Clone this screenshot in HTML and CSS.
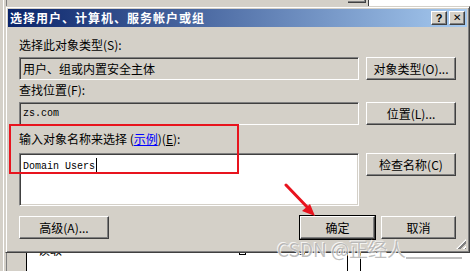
FILE: index.html
```html
<!DOCTYPE html>
<html lang="zh-CN">
  <head>
    <meta charset="utf-8" />
    <title>选择用户、计算机、服务帐户或组</title>
    <link rel="stylesheet" href="styles.css">
  </head>
  <body>
    <div class="desktop">
      <div class="parent">
        <div class="parent-btn"></div>
        <div class="parent-white-top"></div>
        <div class="parent-white-right"></div>
        <div class="parent-list">
          <span class="list-text">读取</span>
          <span class="list-check c1"></span>
          <span class="list-check c2"></span>
          <span class="list-col col1"></span>
          <span class="list-col col2"></span>
        </div>
      </div>

      <div class="dialog">
        <div class="titlebar">
          <span class="title">选择用户、计算机、服务帐户或组</span>
          <span class="title-buttons">
            <span class="tbtn">?</span>
            <span class="tbtn tbtn-x">✕</span>
          </span>
        </div>

        <div class="body">
          <div class="label first">选择此对象类型(S):</div>
          <div class="row">
            <div class="field">用户、组或内置安全主体</div>
            <button class="btn">对象类型(O)...</button>
          </div>

          <div class="label">查找位置(F):</div>
          <div class="row">
            <div class="field mono">zs.com</div>
            <button class="btn">位置(L)...</button>
          </div>

          <div class="label third">输入对象名称来选择 (<a class="link">示例</a>)(<u>E</u>):</div>
          <div class="row">
            <div class="field area mono">Domain Users<span class="caret"></span></div>
            <button class="btn">检查名称(C)</button>
          </div>

          <div class="footer">
            <button class="btn">高级(A)...</button>
            <div class="footer-right">
              <button class="btn btn-small btn-default">确定</button>
              <button class="btn btn-small">取消</button>
            </div>
          </div>
        </div>

        <div class="grip"></div>
        <div class="highlight"></div>
      </div>

      <svg class="arrow" width="40" height="40" viewBox="0 0 40 40">
        <line x1="2" y1="2" x2="26" y2="27" stroke="#e8141e" stroke-width="3" stroke-linecap="round" />
        <polygon points="31,33 18,28 26,21" fill="#e8141e" />
      </svg>

      <div class="watermark">CSDN @正经人<span class="wm-line"></span></div>
    </div>
  </body>
</html>
```

FILE: styles.css
```css
html {
  font-family: "Noto Sans CJK SC", "Liberation Sans", sans-serif;
  font-size: 12px;
  line-height: 14px;
}

body {
  margin: 0;
  background-color: #d4d0c8;
}

.desktop {
  position: relative;
  width: 476px;
  height: 271px;
  overflow: hidden;
  background-color: #d4d0c8;
}

/* window behind the dialog */

.parent {
  position: absolute;
  inset: 0;
  border-left: 3px solid #d4d0c8;
}

.parent::before {
  content: "";
  position: absolute;
  left: 0;
  top: 0;
  bottom: 0;
  width: 1px;
  background: #fff;
}

.parent::after {
  content: "";
  position: absolute;
  left: 3px;
  top: 0;
  bottom: 0;
  width: 1px;
  background: #808080;
}

.parent-btn {
  position: absolute;
  left: 345px;
  top: -12px;
  width: 17px;
  height: 14px;
  border-right: 1px solid #404040;
  border-bottom: 1px solid #404040;
  box-shadow: inset -1px -1px #808080;
}

.parent-white-top {
  position: absolute;
  left: 365px;
  top: 0;
  right: 0;
  height: 6px;
  background: #fff;
  border-left: 1px solid #404040;
}

.parent-white-right {
  position: absolute;
  left: 465px;
  top: 0;
  right: 0;
  bottom: 0;
  background: #fff;
}

.parent-list {
  position: absolute;
  left: 23px;
  top: 236px;
  right: 0;
  bottom: 0;
  background: #fff;
  border-left: 1px solid #000;
}

.list-text {
  position: absolute;
  left: 11px;
  top: 7px;
}

.list-check {
  position: absolute;
  top: 12px;
  width: 5px;
  height: 5px;
  border: 1px solid #000;
}

.list-check.c1 { left: 212px; }
.list-check.c2 { left: 271px; }

.list-col {
  position: absolute;
  top: 14px;
  bottom: 0;
  width: 1px;
  background: #000;
}

.list-col.col1 { left: 320px; }
.list-col.col2 { left: 333px; }

/* dialog */

.dialog {
  position: absolute;
  left: 5px;
  top: 6px;
  width: 461px;
  height: 243px;
  padding: 1px;
  border: 1px solid;
  border-color: #d4d0c8 #404040 #404040 #d4d0c8;
  box-shadow: inset 1px 1px #fff, inset -1px -1px #808080;
  background: #d4d0c8;
}

.titlebar {
  display: flex;
  align-items: center;
  justify-content: space-between;
  height: 18px;
  margin: 1px 1px 0 1px;
  padding: 0 2px 0 2px;
  background: linear-gradient(to right, #0a246a, #a6caf0);
}

.title {
  color: #fff;
  font-weight: bold;
  letter-spacing: 1px;
}

.title-buttons {
  display: flex;
  gap: 2px;
}

.tbtn {
  display: flex;
  align-items: center;
  justify-content: center;
  box-sizing: border-box;
  width: 16px;
  height: 14px;
  border: 1px solid;
  border-color: #fff #404040 #404040 #fff;
  box-shadow: inset -1px -1px #808080;
  background: #d4d0c8;
  color: #000;
  font-family: "Liberation Sans", sans-serif;
  font-weight: bold;
  font-size: 11px;
}

.tbtn-x {
  font-size: 10px;
  font-weight: normal;
}

.body {
  padding: 0 12px;
}

.label {
  margin-top: 3px;
  height: 14px;
}

.label.first {
  margin-top: 11px;
}

.label.third {
  margin-top: 7px;
}

.link {
  color: #0000ff;
  text-decoration: underline;
}

.row {
  display: flex;
  align-items: flex-start;
  gap: 7px;
  margin-top: 5px;
}

.label.third + .row {
  margin-top: 7px;
}

.field {
  box-sizing: border-box;
  flex: 1;
  height: 23px;
  padding: 3px 3px;
  border: 1px solid;
  border-color: #808080 #fff #fff #808080;
  box-shadow: inset 1px 1px #404040, inset -1px -1px #d4d0c8;
  line-height: 15px;
}

.mono {
  font-family: "Liberation Mono", monospace;
  font-size: 10px;
  padding-left: 3px;
}

.field.area {
  height: 53px;
  background: #fff;
  padding-top: 4px;
}

.caret {
  display: inline-block;
  width: 1px;
  height: 14px;
  margin-left: 1px;
  vertical-align: -3px;
  background: #000;
}

.btn {
  box-sizing: border-box;
  width: 90px;
  height: 23px;
  padding: 0;
  border: 1px solid;
  border-color: #fff #404040 #404040 #fff;
  box-shadow: inset -1px -1px #808080;
  background: #d4d0c8;
  color: #000;
  font-family: inherit;
  font-size: 12px;
  line-height: 14px;
}

.btn-small {
  width: 75px;
}

.btn-default {
  border-color: #fff #404040 #404040 #fff;
  box-shadow: inset -1px -1px #808080, 0 0 0 1px #000;
}

.footer {
  display: flex;
  justify-content: space-between;
  margin-top: 10px;
}

.footer-right {
  display: flex;
  gap: 6px;
}

.grip {
  position: absolute;
  right: 3px;
  bottom: 3px;
  width: 10px;
  height: 10px;
  background: repeating-linear-gradient(135deg, transparent 0 2px, #fff 2px 3px, #808080 3px 5px);
  clip-path: polygon(100% 0, 100% 100%, 0 100%);
}

.highlight {
  position: absolute;
  left: 3px;
  top: 117px;
  width: 226px;
  height: 46px;
  border: 2px solid #e8141e;
}

.arrow {
  position: absolute;
  left: 284px;
  top: 183px;
}

.watermark {
  position: absolute;
  left: 277px;
  top: 239px;
  display: flex;
  align-items: flex-end;
  font-size: 19px;
  line-height: 20px;
  color: rgba(170, 170, 170, 0.75);
  text-shadow: 1px 1px 0 rgba(255, 255, 255, 0.8), -1px -1px 0 rgba(255, 255, 255, 0.8);
}

.wm-line {
  display: inline-block;
  width: 56px;
  height: 2px;
  background: rgba(170, 170, 170, 0.75);
}
```
